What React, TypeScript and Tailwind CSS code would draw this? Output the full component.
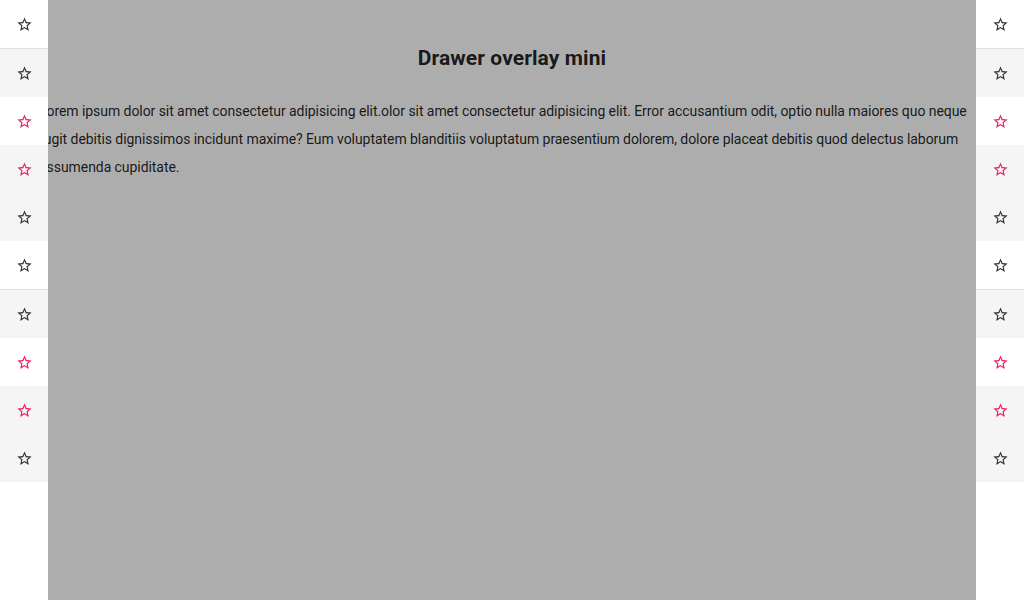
import React from "react";

type Row = { bg: "white" | "grey"; pink: boolean; divider?: boolean };

const rows: Row[] = [
  { bg: "white", pink: false, divider: true },
  { bg: "grey", pink: false },
  { bg: "white", pink: true },
  { bg: "grey", pink: true },
  { bg: "grey", pink: false },
  { bg: "white", pink: false, divider: true },
  { bg: "grey", pink: false },
  { bg: "white", pink: true },
  { bg: "grey", pink: true },
  { bg: "grey", pink: false },
];

function StarIcon({ pink }: { pink: boolean }) {
  return (
    <svg
      width="17"
      height="17"
      viewBox="0 0 24 24"
      fill={pink ? "#e91e63" : "#333333"}
    >
      <path d="M22 9.24l-7.19-.62L12 2 9.19 8.63 2 9.24l5.46 4.73L5.82 21 12 17.27 18.18 21l-1.63-7.03L22 9.24zM12 15.4l-3.76 2.27 1-4.28-3.32-2.88 4.38-.38L12 6.1l1.71 4.04 4.38.38-3.32 2.88 1 4.28L12 15.4z" />
    </svg>
  );
}

function MiniDrawer({ side }: { side: "left" | "right" }) {
  return (
    <div
      className={
        side === "left"
          ? "absolute left-0 top-0 bottom-0 w-12 bg-white flex flex-col"
          : "absolute right-0 top-0 bottom-0 w-12 bg-white flex flex-col"
      }
    >
      {rows.map((r, i) => (
        <React.Fragment key={i}>
          <div
            className={
              r.bg === "grey"
                ? "h-12 flex items-center justify-center bg-[#f5f5f5]"
                : "h-12 flex items-center justify-center bg-white"
            }
          >
            <StarIcon pink={r.pink} />
          </div>
          {r.divider && <div className="h-px bg-[#e0e0e0]" />}
        </React.Fragment>
      ))}
    </div>
  );
}

export default function App() {
  return (
    <div
      className="relative w-full h-[600px] overflow-hidden bg-white"
      style={{ fontFamily: "Roboto, 'Noto Sans', sans-serif" }}
    >
      <div className="pt-[44px] text-black/87">
        <h2 className="text-[21px] leading-[29px] font-bold text-center tracking-[0.1px]">
          Drawer overlay mini
        </h2>
        <p className="mt-[24px] pl-[39px] pr-[45px] text-[14px] leading-[28px] tracking-[-0.06px]">
          Lorem ipsum dolor sit amet consectetur adipisicing elit.olor sit amet
          consectetur adipisicing elit. Error accusantium odit, optio nulla
          maiores quo neque fugit debitis dignissimos incidunt maxime? Eum
          voluptatem blanditiis voluptatum praesentium dolorem, dolore placeat
          debitis quod delectus laborum assumenda cupiditate.
        </p>
      </div>
      <div className="absolute inset-0 bg-black/[0.32]" />
      <MiniDrawer side="left" />
      <MiniDrawer side="right" />
    </div>
  );
}
